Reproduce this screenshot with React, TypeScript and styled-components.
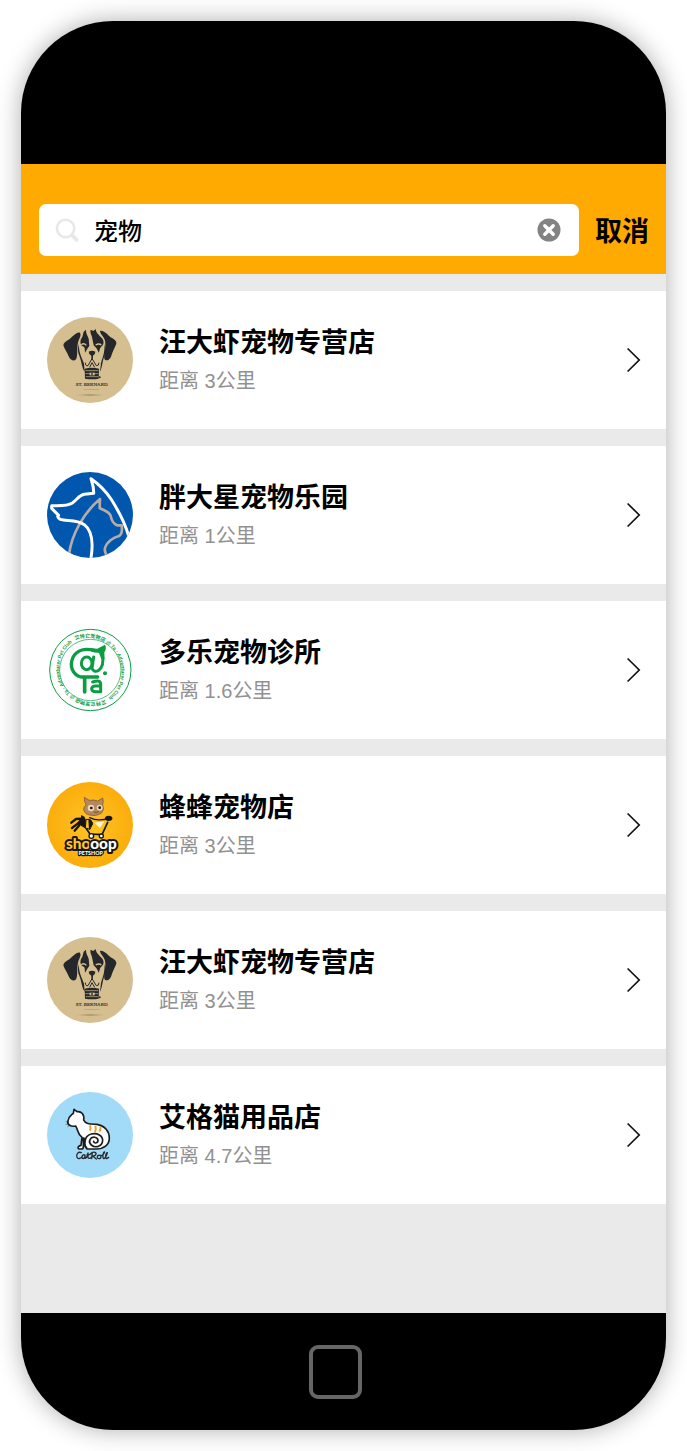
import React, { useState } from 'react';
import styled, { createGlobalStyle } from 'styled-components';

const GlobalStyle = createGlobalStyle`
  * { box-sizing: border-box; }
  body {
    margin: 0;
    background: #fff;
    color: #000;
    font-family: "Liberation Sans", "Noto Sans CJK SC", sans-serif;
  }
`;

const Page = styled.div`
  padding: 21px;
`;

const Phone = styled.div`
  display: flex;
  flex-direction: column;
  min-height: calc(100vh - 42px);
  overflow: hidden;
  border-radius: 92px;
  background: #eaeaea;
  box-shadow: 0 0 24px rgba(0, 0, 0, 0.32);
`;

const TopBezel = styled.div`
  height: 143px;
  background: #000;
`;

const BottomBezel = styled.div`
  display: flex;
  align-items: center;
  justify-content: center;
  height: 117px;
  padding-right: 17px;
  background: #000;
`;

const HomeButton = styled.button`
  width: 53px;
  height: 54px;
  padding: 0;
  border: 4px solid #666;
  border-radius: 9px;
  background: #000;
`;

const SearchBar = styled.form`
  display: flex;
  align-items: flex-end;
  height: 110px;
  padding: 0 17px 18px 18px;
  background: #ffaa00;
`;

const SearchField = styled.label`
  display: flex;
  flex: 1;
  align-items: center;
  gap: 13px;
  min-width: 0;
  height: 52px;
  padding: 0 18px 0 16px;
  border-radius: 7px;
  background: #fff;
`;

const SearchInput = styled.input`
  flex: 1;
  min-width: 0;
  height: 36px;
  padding: 0 0 2px;
  border: 0;
  outline: 0;
  background: transparent;
  color: #000;
  font: 500 24px/34px "Noto Sans CJK SC", sans-serif;
`;

const ClearButton = styled.button`
  display: flex;
  padding: 0;
  border: 0;
  background: none;
`;

const CancelButton = styled.button`
  height: 52px;
  padding: 0 0 0 16px;
  border: 0;
  background: none;
  color: #000;
  font: 700 27px/52px "Noto Sans CJK SC", sans-serif;
`;

const ShopList = styled.ul`
  display: flex;
  flex: 1;
  flex-direction: column;
  gap: 17px;
  margin: 0;
  padding: 17px 0 109px;
  list-style: none;
`;

const ShopLink = styled.a`
  display: flex;
  align-items: center;
  height: 138px;
  padding: 0 25px 0 26px;
  background: #fff;
  color: inherit;
  text-decoration: none;
`;

const Avatar = styled.svg`
  flex: none;
  width: 86px;
  height: 86px;
`;

const ShopText = styled.div`
  flex: 1;
  min-width: 0;
  padding: 2px 16px 0 26px;
`;

const ShopName = styled.h2`
  margin: 0;
  font: 700 27px/40px "Noto Sans CJK SC", sans-serif;
`;

const Distance = styled.p`
  margin: 0;
  color: #919191;
  font: 400 20px/40px "Liberation Sans", "Noto Sans CJK SC", sans-serif;
`;

const SearchIcon = () => (
  <svg width="26" height="26" viewBox="0 0 26 26" fill="none" stroke="#e8e8e8" aria-hidden="true">
    <circle cx="10.6" cy="11.4" r="8.7" strokeWidth="2.6" />
    <path d="M17.4 18.6l4 4" strokeWidth="4" strokeLinecap="round" />
  </svg>
);

const ClearIcon = () => (
  <svg width="24" height="24" viewBox="0 0 24 24" aria-hidden="true">
    <circle cx="12" cy="12" r="11.5" fill="#838383" />
    <path d="M7.8 7.8l8.4 8.4M16.2 7.8l-8.4 8.4" stroke="#fff" strokeWidth="3.4" strokeLinecap="round" />
  </svg>
);

const Chevron = () => (
  <svg width="15" height="26" viewBox="0 0 15 26" fill="none" stroke="#111" strokeWidth="1.7" aria-hidden="true">
    <path d="M1.6 1.5L13.2 13 1.6 24.5" />
  </svg>
);

/* Every logo is drawn in the same 258-unit circle. */
const logoProps = { viewBox: '20 20 258 258', 'aria-hidden': true };

const BernardLogo = () => (
  <Avatar {...logoProps}>
    <defs>
      <radialGradient id="bernardShade">
        <stop offset="0" stopColor="#8c7c58" />
        <stop offset="1" stopColor="#d5bf91" stopOpacity="0" />
      </radialGradient>
    </defs>
    <circle cx="149" cy="149" r="129" fill="#d5bf91" />
    <g fill="#25272a">
      <path d="M119 67C108 64 98 78 87 87C76 94 69 98 69 105C72 116 81 126 86 140C91 150 101 154 107 147C113 137 109 112 113 97C115 84 124 78 119 67Z" />
      <path d="M179 62C190 59 201 73 211 81C223 87 229 92 228 100C223 112 217 123 212 139C207 150 196 154 192 145C190 129 198 107 194 91C191 78 180 73 179 62Z" />
      <path d="M130 64L137 58C136 69 142 76 145 85L147 107C141 114 138 122 134 127C133 116 135 110 126 107C118 101 119 88 126 80Z" />
      <path d="M151 58L159 62L166 56C167 68 177 75 185 84C191 91 192 103 184 108C177 114 179 120 175 127C171 117 166 110 160 105L156 85C155 74 148 69 151 58Z" />
      <path d="M145 124Q155 118 165 124Q165 132 158 136V145H153V136Q145 132 145 124Z" />
      <path d="M116 101C114 122 123 139 131 160L133 184C125 174 124 154 118 139C112 126 111 114 116 101Z" />
      <path d="M192 101C195 122 187 140 182 158L179 184C185 175 186 155 191 140C196 128 197 114 192 101Z" />
      <path d="M133 175Q155 169 176 175L175 205Q155 209 134 205Z" />
      <circle cx="178" cy="201" r="3" />
    </g>
    <g fill="none" stroke="#d5bf91" strokeWidth="4">
      <path d="M123 103Q131 97 138 105M166 104Q176 98 183 104" />
      <path d="M135 181H174M135 190H174M136 199H174" strokeWidth="2" />
    </g>
    <path d="M148 187H163V195H148Z" fill="#d5bf91" />
    <path d="M153 187H157V195H153Z" fill="#25272a" />
    <path d="M155 145L143 166Q135 168 135 157M155 145L168 166Q176 167 176 157M148 171L155 157L163 171" fill="none" stroke="#25272a" strokeWidth="3" />
    <text x="154" y="227" textAnchor="middle" fontFamily="Liberation Serif" fontSize="15" fill="#3a3428" stroke="#3a3428" strokeWidth="0.5">ST. BERNARD</text>
    <text x="154" y="238" textAnchor="middle" fontFamily="Liberation Serif" fontSize="8" fill="#766a50">FUNSHOUSE</text>
    <ellipse cx="150" cy="254" rx="52" ry="5" fill="url(#bernardShade)" />
  </Avatar>
);

const BlueDogLogo = () => (
  <Avatar {...logoProps}>
    <defs><clipPath id="blueDogClip"><circle cx="149" cy="149" r="129" /></clipPath></defs>
    <circle cx="149" cy="149" r="129" fill="#0057ad" />
    <g clipPath="url(#blueDogClip)" fill="none" strokeWidth="8" strokeLinejoin="round">
      <path d="M86 268C94 205 133 139 179 101L178 128C194 137 206 139 211 151C213 165 217 174 230 180H244C246 195 245 207 236 212C219 216 199 230 194 248C191 259 196 267 204 276" stroke="#b3acaa" />
      <path d="M151 284C158 245 158 198 132 178C109 162 78 168 60 162C50 157 51 150 55 150L34 129V121C58 122 84 121 96 113C112 101 116 90 132 87L160 84C161 67 156 53 152 40C180 59 198 79 214 104C239 144 255 176 265 212" stroke="#fff" strokeWidth="9" />
    </g>
  </Avatar>
);

const AtLogo = () => (
  <Avatar {...logoProps}>
    <defs>
      <path id="atRingEast" d="M105 59A101 101 0 0 1 195 239" />
      <path id="atRingWest" d="M195 239A101 101 0 0 1 105 59" />
    </defs>
    <circle cx="149" cy="149" r="129" fill="#fff" />
    <g fill="none" stroke="#0a9d43">
      <circle cx="150" cy="149" r="122" strokeWidth="3" />
      <circle cx="150" cy="149" r="92" strokeWidth="2" />
    </g>
    <g fill="#0a9d43" fontFamily="Liberation Sans, Noto Sans CJK SC, sans-serif" fontWeight="700" fontSize="15">
      <text><textPath href="#atRingEast">艾特它宠物店 @ Ta · Adventurer Pet Club</textPath></text>
      <text><textPath href="#atRingWest">艾特它宠物店 @ Ta · Adventurer Pet Club</textPath></text>
    </g>
    <g fill="none" stroke="#0a9d43" strokeWidth="10" strokeLinecap="round" strokeLinejoin="round">
      <path d="M163 91C136 82 110 88 98 111C86 137 97 164 122 170L172 170" />
      <path d="M186 106C190 124 186 142 174 151Q160 157 155 144L160 110" strokeWidth="9" />
      <ellipse cx="139" cy="129" rx="16" ry="19" strokeWidth="9" />
      <path d="M133 172V215" strokeWidth="11" />
      <path d="M157 185Q181 177 181 192V214H165Q154 213 154 205Q155 197 166 197H179" strokeWidth="9" />
    </g>
    <path d="M152 84L171 85L194 73Q200 84 192 96L193 117L183 116L176 98L153 94Z" fill="#0a9d43" />
    <circle cx="194" cy="159" r="6" fill="#0a9d43" />
  </Avatar>
);

const ShooopLogo = () => (
  <Avatar {...logoProps}>
    <defs>
      <radialGradient id="shooopFill">
        <stop offset="0" stopColor="#ffc426" />
        <stop offset="1" stopColor="#fbad0c" />
      </radialGradient>
    </defs>
    <circle cx="149" cy="149" r="129" fill="url(#shooopFill)" />
    <path d="M132 66L147 75Q160 72 172 77L187 68Q191 79 187 88Q194 102 183 114Q166 125 147 119Q129 114 130 98L137 88Q131 79 132 66Z" fill="#b5875d" stroke="#73502e" strokeWidth="2" />
    <circle cx="152" cy="98" r="10" fill="#ecd5b8" /><circle cx="178" cy="97" r="9" fill="#ecd5b8" />
    <circle cx="153" cy="98" r="4" fill="#111" /><circle cx="178" cy="97" r="4" fill="#111" />
    <path d="M160 110Q168 114 176 108" fill="none" stroke="#513620" strokeWidth="2" />
    <g fill="none" stroke="#161616" strokeLinecap="round" strokeLinejoin="round">
      <path d="M121 130L107 131L93 142M122 134L112 145L95 158M125 139L117 150L103 166" strokeWidth="7" />
      <path d="M132 151L149 176L185 178L202 141" strokeWidth="5" fill="#ffc21b" />
      <path d="M148 127Q174 140 207 128" strokeWidth="4" />
    </g>
    <path d="M122 120Q134 121 137 137L137 160L122 151Z" fill="#161616" />
    <path d="M137 133Q150 129 157 144L149 162L135 158Z" fill="#ffc21b" stroke="#161616" strokeWidth="3" />
    <path d="M144 130Q157 132 157 147L146 163Z" fill="#161616" />
    <path d="M162 142L192 138L179 158Z" fill="#fff5d4" />
    <ellipse cx="205" cy="129" rx="11" ry="8" fill="#161616" />
    <circle cx="153" cy="182" r="7" fill="#fff" stroke="#161616" strokeWidth="4" />
    <circle cx="183" cy="182" r="6" fill="#fff" stroke="#161616" strokeWidth="4" />
    <g fontFamily="Lato, sans-serif" fontWeight="900" textAnchor="middle" stroke="#161616" strokeLinejoin="round" paintOrder="stroke">
      <text x="153" y="220" fontSize="46" strokeWidth="12" fill="#fff"><tspan fill="#ffc72d">sho</tspan>oop</text>
      <text x="151" y="238" fontSize="16" strokeWidth="7" fill="#fff">PETSHOP</text>
    </g>
  </Avatar>
);

const CatRollLogo = () => (
  <Avatar {...logoProps}>
    <circle cx="149" cy="149" r="129" fill="#a2dbf8" />
    <g stroke="#1e1d1e" strokeLinecap="round" strokeLinejoin="round">
      <path d="M99 84L101 72L110 79C123 77 133 88 130 104C135 117 151 116 170 117C194 121 207 139 207 158C207 179 190 191 168 191H140C133 183 131 172 135 161L129 158V184Q129 191 122 191H116C109 187 116 181 122 180L125 156C110 144 113 132 106 122C91 125 80 118 83 107C84 99 89 92 94 88Z" fill="#fff" strokeWidth="5" />
      <path d="M139 188C132 180 131 171 136 160C142 145 163 141 177 149C192 158 189 177 174 183C157 188 143 174 149 163C155 151 172 155 173 165C173 175 160 175 160 168" fill="none" strokeWidth="5" />
      <path d="M85 112L77 109M85 115L77 117M88 119L82 124" strokeWidth="1.5" />
    </g>
    <g fill="none" stroke="#e7a42a" strokeWidth="6">
      <path d="M149 120Q152 127 149 136M165 121Q168 130 164 141M180 124Q182 132 177 139" />
    </g>
    <g fill="none" stroke="#292b30" strokeWidth="4" strokeLinecap="round" strokeLinejoin="round" aria-label="CatRoll">
      <path d="M123 202C114 197 106 208 110 216C113 223 122 219 126 214M134 209C124 205 122 221 129 220Q134 218 134 210V219Q139 220 143 203M140 208H148M143 204V217Q147 222 153 216" />
      <path d="M156 201L154 220M149 207C154 198 169 199 167 206C166 211 160 212 156 211L168 221M178 210C169 208 169 221 176 220C185 220 182 208 178 210M182 212Q192 207 193 200C188 199 185 220 191 220Q198 216 201 202C196 201 194 221 199 220L205 216" />
    </g>
  </Avatar>
);

const shops = [
  { name: '汪大虾宠物专营店', distance: '3', Logo: BernardLogo },
  { name: '胖大星宠物乐园', distance: '1', Logo: BlueDogLogo },
  { name: '多乐宠物诊所', distance: '1.6', Logo: AtLogo },
  { name: '蜂蜂宠物店', distance: '3', Logo: ShooopLogo },
  { name: '汪大虾宠物专营店', distance: '3', Logo: BernardLogo },
  { name: '艾格猫用品店', distance: '4.7', Logo: CatRollLogo },
];

export default function App() {
  const [query, setQuery] = useState('宠物');
  return (
    <>
      <GlobalStyle />
      <Page>
        <Phone>
          <TopBezel />
          <SearchBar onSubmit={(e: React.FormEvent) => e.preventDefault()}>
            <SearchField>
              <SearchIcon />
              <SearchInput
                aria-label="搜索"
                value={query}
                onChange={(e: React.ChangeEvent<HTMLInputElement>) => setQuery(e.target.value)}
              />
              <ClearButton type="button" aria-label="清除" onClick={() => setQuery('')}>
                <ClearIcon />
              </ClearButton>
            </SearchField>
            <CancelButton type="button">取消</CancelButton>
          </SearchBar>
          <ShopList>
            {shops.map(({ name, distance, Logo }, index) => (
              <li key={index}>
                <ShopLink href="#">
                  <Logo />
                  <ShopText>
                    <ShopName>{name}</ShopName>
                    <Distance>距离 {distance}公里</Distance>
                  </ShopText>
                  <Chevron />
                </ShopLink>
              </li>
            ))}
          </ShopList>
          <BottomBezel>
            <HomeButton type="button" aria-label="主屏幕" />
          </BottomBezel>
        </Phone>
      </Page>
    </>
  );
}
